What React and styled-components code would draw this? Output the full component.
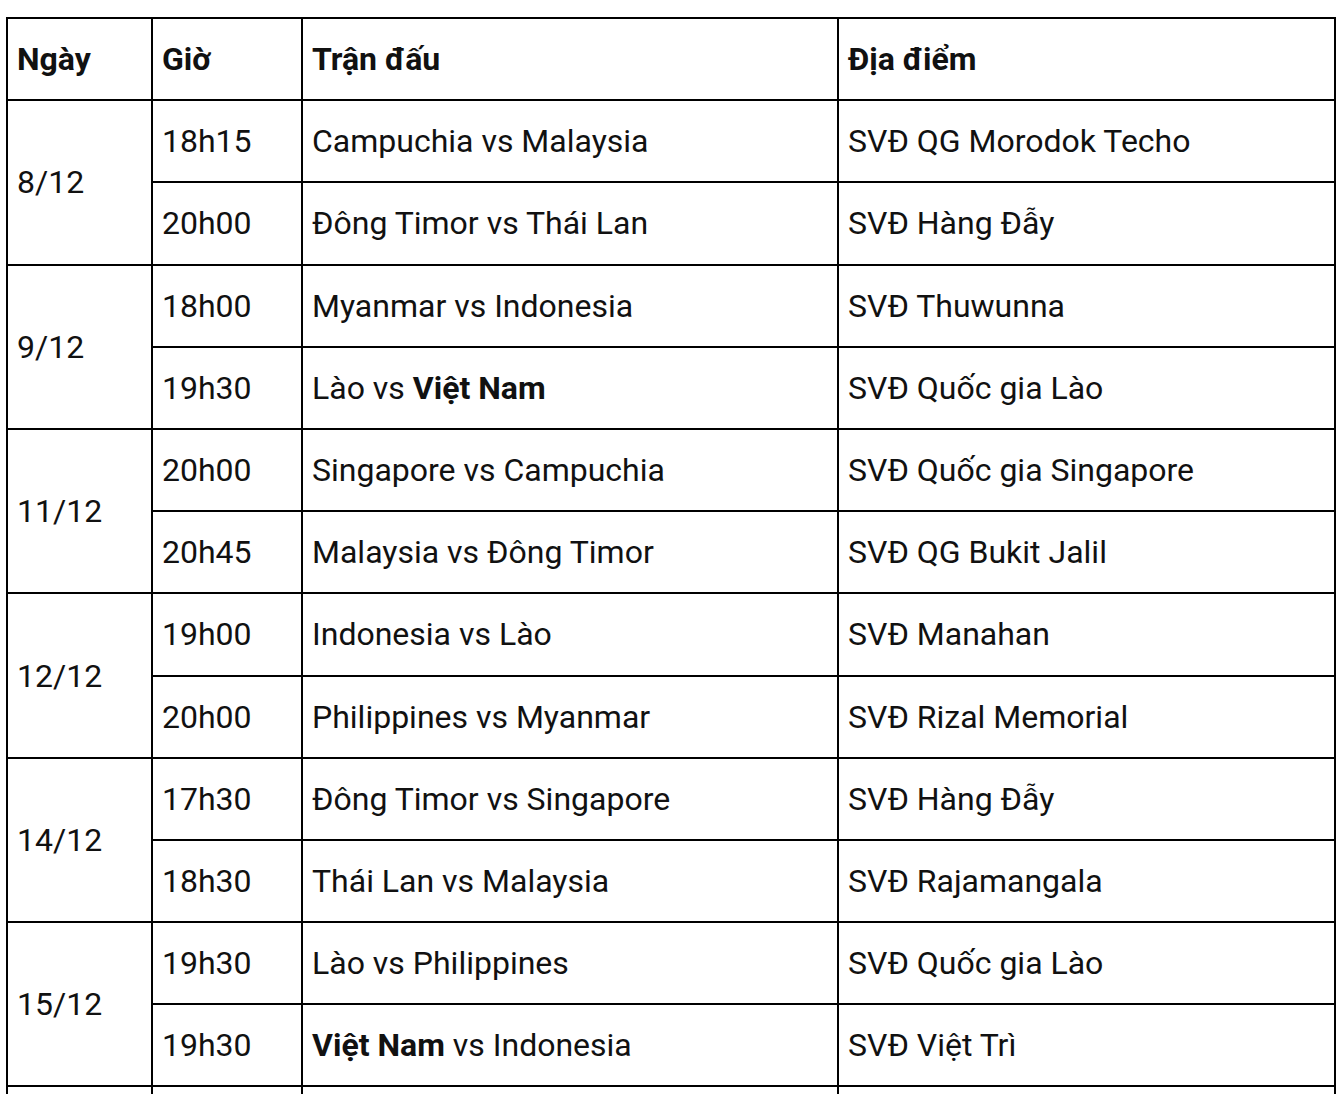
import React from "react";
import styled, { createGlobalStyle } from "styled-components";

const GlobalStyle = createGlobalStyle`
  body {
    margin: 0;
    background: #ffffff;
    font-family: Roboto, "Noto Sans", sans-serif;
    color: #111111;
  }
`;

const Wrapper = styled.div`
  padding: 17px 0 0 6px;
`;

const Table = styled.table`
  border-collapse: collapse;
  table-layout: fixed;
  width: 1328px;
  font-size: 32px;
`;

const HeadCell = styled.th`
  border: 2px solid #000;
  height: 80.2px;
  padding: 0 9px;
  text-align: left;
  font-weight: 700;
  vertical-align: middle;
`;

const Cell = styled.td`
  border: 2px solid #000;
  height: 80.2px;
  padding: 0 9px;
  text-align: left;
  vertical-align: middle;
  white-space: nowrap;
`;

const Team = styled.span`
  font-weight: ${({ $home }) => ($home ? 700 : 400)};
`;

const schedule = [
  {
    date: "8/12",
    games: [
      { time: "18h15", a: "Campuchia", b: "Malaysia", venue: "SVĐ QG Morodok Techo" },
      { time: "20h00", a: "Đông Timor", b: "Thái Lan", venue: "SVĐ Hàng Đẫy" },
    ],
  },
  {
    date: "9/12",
    games: [
      { time: "18h00", a: "Myanmar", b: "Indonesia", venue: "SVĐ Thuwunna" },
      { time: "19h30", a: "Lào", b: "Việt Nam", venue: "SVĐ Quốc gia Lào" },
    ],
  },
  {
    date: "11/12",
    games: [
      { time: "20h00", a: "Singapore", b: "Campuchia", venue: "SVĐ Quốc gia Singapore" },
      { time: "20h45", a: "Malaysia", b: "Đông Timor", venue: "SVĐ QG Bukit Jalil" },
    ],
  },
  {
    date: "12/12",
    games: [
      { time: "19h00", a: "Indonesia", b: "Lào", venue: "SVĐ Manahan" },
      { time: "20h00", a: "Philippines", b: "Myanmar", venue: "SVĐ Rizal Memorial" },
    ],
  },
  {
    date: "14/12",
    games: [
      { time: "17h30", a: "Đông Timor", b: "Singapore", venue: "SVĐ Hàng Đẫy" },
      { time: "18h30", a: "Thái Lan", b: "Malaysia", venue: "SVĐ Rajamangala" },
    ],
  },
  {
    date: "15/12",
    games: [
      { time: "19h30", a: "Lào", b: "Philippines", venue: "SVĐ Quốc gia Lào" },
      { time: "19h30", a: "Việt Nam", b: "Indonesia", venue: "SVĐ Việt Trì" },
    ],
  },
];

const TeamName = ({ name }) => <Team $home={name === "Việt Nam"}>{name}</Team>;

const App = () => (
  <>
    <GlobalStyle />
    <Wrapper>
      <Table>
        <colgroup>
          <col style={{ width: 145 }} />
          <col style={{ width: 150 }} />
          <col style={{ width: 536 }} />
          <col style={{ width: 497 }} />
        </colgroup>
        <thead>
          <tr>
            <HeadCell>Ngày</HeadCell>
            <HeadCell>Giờ</HeadCell>
            <HeadCell>Trận đấu</HeadCell>
            <HeadCell>Địa điểm</HeadCell>
          </tr>
        </thead>
        <tbody>
          {schedule.map((day) =>
            day.games.map((g, i) => (
              <tr key={day.date + i}>
                {i === 0 && <Cell rowSpan={day.games.length}>{day.date}</Cell>}
                <Cell>{g.time}</Cell>
                <Cell>
                  <TeamName name={g.a} /> vs <TeamName name={g.b} />
                </Cell>
                <Cell>{g.venue}</Cell>
              </tr>
            ))
          )}
          {/* next row starts just below the visible frame */}
          <tr>
            <Cell />
            <Cell />
            <Cell />
            <Cell />
          </tr>
        </tbody>
      </Table>
    </Wrapper>
  </>
);

export default App;
